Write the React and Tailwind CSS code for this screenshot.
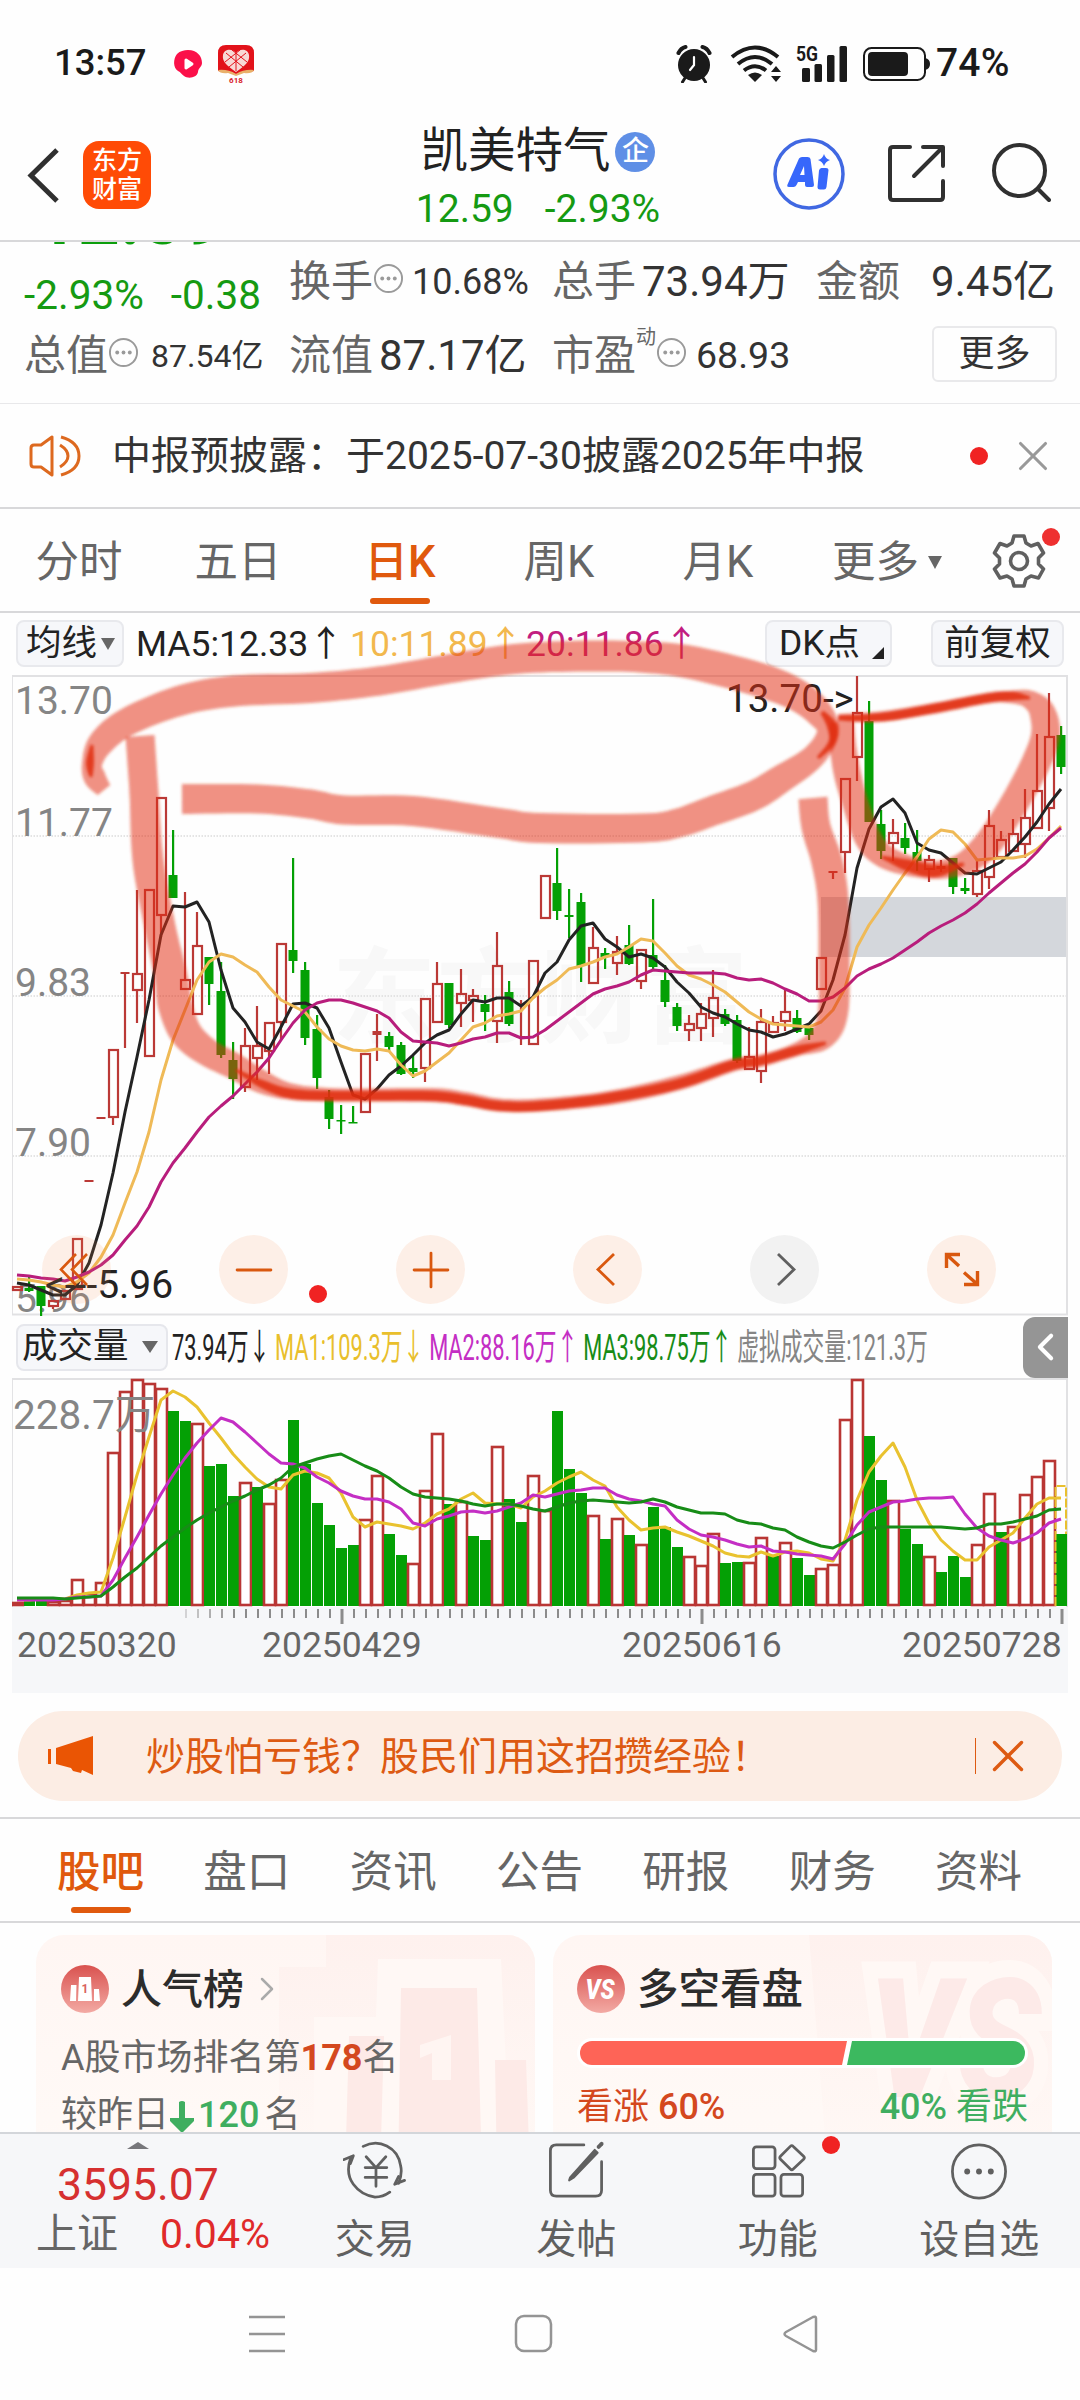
import { ChevronLeft, ChevronRight, Minus, Plus, X } from 'lucide-react';

const STEP = 12;
const xAt = (i) => 17 + i * STEP;

// [color, high, bodyTop, bodyBottom, low]
const CANDLES = [
  ['r', 1286, 1286, 1291, 1291], ['g', 1277, 1288, 1291, 1292], ['g', 1286, 1286, 1306, 1316], ['r', 1300, 1300, 1307, 1309],
  ['r', 1290, 1290, 1300, 1300], ['r', 1238, 1238, 1290, 1290], ['r', 1181, 1181, 1181, 1181], ['r', 1118, 1118, 1118, 1118],
  ['r', 1049, 1049, 1118, 1125], ['r', 973, 973, 973, 1048], ['r', 890, 973, 991, 1023], ['r', 889, 889, 1057, 1057],
  ['r', 797, 797, 916, 937], ['g', 830, 875, 898, 898], ['r', 892, 979, 990, 990], ['r', 912, 945, 1015, 1015],
  ['g', 957, 957, 984, 1005], ['g', 962, 991, 1055, 1058], ['g', 1042, 1060, 1079, 1099], ['r', 1028, 1045, 1088, 1092],
  ['r', 1006, 1045, 1059, 1080], ['r', 1022, 1022, 1052, 1074], ['r', 943, 943, 1023, 1040], ['g', 858, 950, 961, 973],
  ['g', 962, 970, 1038, 1045], ['g', 1015, 1029, 1078, 1089], ['g', 1090, 1097, 1119, 1129], ['g', 1105, 1120, 1120, 1134],
  ['g', 1106, 1122, 1122, 1123], ['r', 1053, 1053, 1113, 1113], ['r', 1014, 1031, 1035, 1061], ['g', 1032, 1036, 1047, 1052],
  ['g', 1042, 1045, 1074, 1075], ['g', 1056, 1068, 1072, 1078], ['r', 998, 998, 1069, 1082], ['r', 962, 983, 1023, 1023],
  ['g', 983, 983, 1025, 1028], ['r', 969, 993, 1004, 1027], ['r', 989, 995, 1001, 1022], ['g', 995, 1004, 1012, 1031],
  ['r', 932, 965, 1022, 1043], ['g', 981, 992, 1024, 1026], ['r', 1000, 1037, 1037, 1045], ['r', 960, 960, 1045, 1045],
  ['r', 875, 875, 919, 919], ['g', 848, 883, 911, 920], ['g', 889, 915, 917, 938], ['g', 893, 902, 966, 982],
  ['r', 927, 947, 984, 984], ['g', 948, 953, 957, 969], ['r', 936, 951, 964, 975], ['g', 925, 945, 964, 965],
  ['r', 949, 949, 982, 989], ['g', 899, 955, 967, 970], ['g', 965, 980, 1002, 1007], ['g', 1003, 1007, 1026, 1031],
  ['r', 1015, 1023, 1031, 1041], ['r', 1003, 1013, 1029, 1041], ['r', 970, 997, 1019, 1037], ['g', 1009, 1014, 1024, 1026],
  ['g', 1015, 1020, 1061, 1063], ['r', 1027, 1056, 1070, 1070], ['r', 1009, 1021, 1072, 1083], ['r', 1016, 1022, 1033, 1033],
  ['r', 990, 1011, 1022, 1031], ['g', 1010, 1018, 1032, 1033], ['g', 1028, 1028, 1035, 1040], ['r', 957, 957, 990, 990],
  ['r', 872, 872, 872, 879], ['r', 778, 778, 853, 873], ['r', 676, 712, 758, 781], ['g', 701, 721, 822, 822],
  ['g', 810, 824, 851, 859], ['r', 819, 832, 844, 861], ['g', 823, 838, 848, 854], ['g', 830, 852, 861, 871],
  ['r', 855, 859, 870, 882], ['r', 860, 866, 869, 872], ['g', 858, 858, 887, 894], ['g', 878, 888, 891, 894],
  ['r', 859, 870, 895, 897], ['r', 810, 825, 878, 889], ['r', 831, 839, 858, 858], ['r', 819, 833, 852, 852],
  ['r', 789, 817, 845, 858], ['r', 734, 790, 829, 829], ['r', 693, 736, 809, 831], ['g', 726, 735, 767, 774],
];

const MA5 = [
  1283, 1285, 1290, 1295, 1295, 1285, 1263, 1225, 1173, 1112, 1057, 1000, 935, 906, 907, 902, 922, 970, 1008, 1022,
  1042, 1049, 1027, 1004, 1003, 1008, 1028, 1062, 1095, 1099, 1089, 1075, 1066, 1055, 1043, 1035, 1030, 1014, 1000, 1002,
  998, 998, 1006, 997, 973, 962, 940, 926, 923, 939, 947, 957, 954, 958, 967, 982, 993, 1007, 1013, 1017,
  1024, 1030, 1032, 1037, 1034, 1029, 1024, 1011, 980, 935, 868, 829, 807, 799, 813, 843, 850, 853, 863, 873,
  874, 868, 862, 850, 837, 822, 804, 789,
];
const MA10 = [
  1279, 1280, 1282, 1285, 1287, 1282, 1273, 1257, 1235, 1203, 1172, 1132, 1080, 1040, 1010, 980, 962, 954, 957, 965,
  972, 987, 1000, 1006, 1012, 1027, 1039, 1046, 1050, 1051, 1049, 1051, 1065, 1076, 1071, 1062, 1053, 1040, 1027, 1023,
  1016, 1014, 1011, 998, 988, 980, 969, 966, 962, 957, 954, 947, 939, 941, 953, 966, 975, 979, 985, 992,
  1002, 1012, 1019, 1024, 1025, 1026, 1027, 1022, 1010, 988, 947, 925, 908, 890, 873, 857, 839, 830, 832, 844,
  860, 859, 858, 858, 856, 849, 838, 826,
];
const MA20 = [
  1275, 1276, 1278, 1279, 1281, 1277, 1272, 1265, 1255, 1240, 1226, 1207, 1182, 1163, 1148, 1132, 1117, 1106, 1096, 1084,
  1072, 1058, 1040, 1023, 1010, 1003, 1000, 1000, 1003, 1007, 1011, 1018, 1032, 1041, 1042, 1043, 1046, 1043, 1039, 1037,
  1033, 1033, 1038, 1037, 1030, 1021, 1012, 1003, 994, 989, 986, 982, 975, 970, 971, 972, 973, 973, 973, 974,
  978, 980, 979, 983, 989, 994, 1001, 1001, 997, 988, 976, 969, 964, 958, 950, 942, 933, 926, 920, 913,
  904, 893, 883, 873, 864, 852, 838, 828,
];

const VOL_COLORS = 'rggrrrrrrrrrrggrgggrgrrgggggg' + 'rrggrrrgrggrggrrgggrgrgrgggrrrggrrgrggrrrrggrggrgggrrgrrrrg';
const VOL_TOPS = [
  1602, 1601, 1600, 1601, 1600, 1579, 1593, 1582, 1452, 1391, 1379, 1383, 1388, 1411, 1421, 1423, 1466, 1464, 1496, 1482,
  1487, 1503, 1479, 1420, 1464, 1503, 1525, 1548, 1545, 1519, 1475, 1534, 1555, 1563, 1490, 1433, 1504, 1501, 1536, 1540,
  1446, 1499, 1522, 1475, 1510, 1411, 1469, 1493, 1515, 1539, 1518, 1535, 1544, 1507, 1527, 1547, 1556, 1565, 1533, 1563,
  1562, 1562, 1537, 1556, 1542, 1558, 1575, 1568, 1564, 1419, 1379, 1436, 1480, 1500, 1529, 1544, 1556, 1572, 1556, 1577,
  1544, 1493, 1532, 1526, 1494, 1476, 1460, 1534,
];
const VMA1 = [
  1600, 1600, 1599, 1599, 1599, 1595, 1593, 1592, 1558, 1517, 1475, 1437, 1400, 1391, 1397, 1407, 1423, 1438, 1454, 1467,
  1479, 1487, 1489, 1475, 1471, 1473, 1478, 1493, 1517, 1527, 1522, 1524, 1526, 1529, 1523, 1514, 1509, 1499, 1493, 1503,
  1504, 1504, 1508, 1497, 1491, 1483, 1477, 1472, 1480, 1486, 1507, 1520, 1530, 1528, 1527, 1532, 1536, 1541, 1546, 1553,
  1556, 1557, 1552, 1556, 1552, 1551, 1553, 1559, 1561, 1540, 1500, 1472, 1456, 1443, 1467, 1500, 1523, 1540, 1551, 1560,
  1560, 1547, 1540, 1533, 1518, 1504, 1498, 1498,
];
const VMA2 = [
  1600, 1600, 1600, 1600, 1599, 1597, 1597, 1596, 1580, 1558, 1537, 1515, 1494, 1475, 1458, 1443, 1430, 1418, 1422, 1432,
  1443, 1454, 1463, 1464, 1468, 1477, 1483, 1491, 1496, 1499, 1499, 1502, 1509, 1523, 1526, 1519, 1516, 1512, 1511, 1513,
  1511, 1507, 1503, 1495, 1497, 1494, 1491, 1490, 1488, 1488, 1495, 1499, 1501, 1504, 1506, 1520, 1529, 1535, 1537, 1540,
  1544, 1547, 1546, 1551, 1552, 1554, 1555, 1556, 1559, 1544, 1525, 1512, 1507, 1502, 1501, 1499, 1498, 1498, 1497, 1514,
  1528, 1536, 1540, 1543, 1539, 1533, 1523, 1519,
];
const VMA3 = [
  1598, 1598, 1598, 1598, 1599, 1598, 1597, 1596, 1587, 1577, 1568, 1557, 1546, 1537, 1528, 1520, 1513, 1507, 1501, 1496,
  1490, 1485, 1478, 1467, 1463, 1459, 1456, 1454, 1460, 1466, 1471, 1478, 1487, 1494, 1497, 1498, 1499, 1501, 1504, 1506,
  1504, 1504, 1506, 1509, 1511, 1507, 1503, 1501, 1500, 1501, 1502, 1503, 1502, 1499, 1502, 1507, 1510, 1513, 1513, 1514,
  1520, 1523, 1524, 1528, 1530, 1537, 1542, 1546, 1548, 1542, 1535, 1529, 1527, 1527, 1527, 1527, 1527, 1527, 1528, 1529,
  1528, 1524, 1524, 1522, 1519, 1516, 1510, 1509,
];

// Marker strokes: [x, y, width]
const SOFT_STROKES = [
  [[104, 790, 16], [95, 778, 22], [92, 764, 20], [101, 743, 26], [127, 722, 28], [179, 701, 30], [234, 691, 31], [310, 688, 30], [379, 681, 29], [448, 669, 29], [515, 659, 30], [585, 656, 31], [640, 657, 31], [689, 662, 33], [757, 679, 34], [795, 694, 32], [818, 712, 28], [828, 732, 22], [813, 757, 24], [781, 779, 28], [753, 796, 30], [712, 811, 30], [678, 823, 29], [643, 828, 29], [540, 828, 30], [499, 823, 30], [413, 811, 30], [344, 810, 29], [310, 804, 29], [258, 799, 29], [182, 799, 30]],
  [[140, 736, 29], [144, 793, 29], [148, 860, 31], [160, 927, 31], [171, 977, 33], [175, 1005, 34], [186, 1033, 32], [207, 1052, 28], [234, 1066, 26], [262, 1082, 23], [293, 1092, 16], [344, 1095, 13], [430, 1095, 14], [465, 1099, 14], [499, 1105, 13], [540, 1105, 13], [609, 1098, 14], [678, 1083, 15], [733, 1065, 13], [760, 1061, 12], [798, 1049, 14], [822, 1037, 26], [833, 1013, 30], [834, 960, 31], [833, 900, 31], [827, 862, 31], [816, 827, 29], [813, 798, 29]],
  [[842, 722, 24], [843, 745, 26], [847, 772, 27], [855, 802, 26], [868, 838, 27], [884, 856, 24], [910, 866, 20], [936, 870, 18], [962, 864, 22], [984, 848, 28], [1004, 820, 28], [1030, 775, 29], [1045, 738, 29], [1042, 712, 26], [1028, 699, 18], [1008, 697, 12], [988, 698, 11], [936, 708, 11], [884, 716, 10], [838, 718, 8]],
];
const DARK_STROKES = [
  [[91, 777, 3], [90, 763, 8], [92, 745, 3]],
  [[236, 1070, 3], [262, 1084, 8], [293, 1094, 10], [344, 1096, 10], [430, 1096, 10], [465, 1100, 10], [499, 1106, 10], [540, 1106, 10], [609, 1098, 10], [678, 1084, 10], [733, 1065, 10], [760, 1061, 9], [798, 1050, 9], [826, 1043, 3]],
  [[822, 712, 4], [832, 726, 10], [832, 742, 7], [818, 758, 3]],
  [[838, 718, 5], [884, 717, 9], [936, 708, 9], [988, 698, 9], [1012, 696, 9], [1030, 698, 3]],
  [[882, 857, 3], [910, 866, 12], [936, 871, 12], [964, 864, 3]],
];

function ribbon(points) {
  const left = [];
  const right = [];
  const get = (i) => points[Math.max(0, Math.min(points.length - 1, i))];
  const samples = [];
  for (let i = 0; i < points.length - 1; i++) {
    for (let s = 0; s < 8; s++) {
      const t = s / 8;
      samples.push([0, 1, 2].map((k) => {
        const [a, b, c, d] = [get(i - 1)[k], get(i)[k], get(i + 1)[k], get(i + 2)[k]];
        return 0.5 * (2 * b + (c - a) * t + (2 * a - 5 * b + 4 * c - d) * t * t + (3 * b - a - 3 * c + d) * t * t * t);
      }));
    }
  }
  samples.push(points[points.length - 1]);
  samples.forEach(([x, y, w], i) => {
    const p = samples[Math.max(0, i - 1)];
    const n = samples[Math.min(samples.length - 1, i + 1)];
    const dx = n[0] - p[0];
    const dy = n[1] - p[1];
    const len = Math.hypot(dx, dy) || 1;
    left.push(`${(x - (dy / len) * w / 2).toFixed(1)},${(y + (dx / len) * w / 2).toFixed(1)}`);
    right.unshift(`${(x + (dy / len) * w / 2).toFixed(1)},${(y - (dx / len) * w / 2).toFixed(1)}`);
  });
  return `M${[...left, ...right].join('L')}Z`;
}

const line = (ys) => ys.map((y, i) => `${xAt(i)},${y}`).join(' ');

function Candle({ i, data }) {
  const [color, high, top, bottom, low] = data;
  const x = xAt(i);
  if (color === 'g') {
    return (
      <g fill="#04a005">
        <rect x={x - 1} y={high} width="2.2" height={low - high} />
        <rect x={x - 4.5} y={top} width="9" height={Math.max(1.5, bottom - top)} />
      </g>
    );
  }
  return (
    <g stroke="#bb3936" strokeWidth="2.2" fill="none">
      {bottom - top > 4 && <rect x={x - 4} y={top + 1} width="9" height={bottom - top - 2} />}
      {bottom - top <= 4 && <path d={`M${x - 4.5} ${(top + bottom) / 2}h9`} strokeWidth={Math.max(2, bottom - top)} />}
      {high < top && <path d={`M${x} ${high}V${top}`} />}
      {low > bottom && <path d={`M${x} ${bottom}V${low}`} />}
    </g>
  );
}

function PriceChart() {
  return (
    <div className="relative h-[639px]">
      <svg viewBox="12 675 1056 639" className="block h-[639px] w-[1056px] overflow-visible" fontFamily="Roboto, 'Noto Sans CJK SC', sans-serif">
        <defs>
          <filter id="soft" x="-5%" y="-5%" width="110%" height="110%">
            <feGaussianBlur stdDeviation="1.6" />
          </filter>
        </defs>
        <text x="332" y="1035" fontSize="104" fontWeight="700" fill="#f8f8f8" textLength="416">东方财富</text>
        <rect x="821" y="897" width="246" height="60" fill="#d4d7dc" />
        <path d="M12.5 836H1067M12.5 996H1067M12.5 1156H1067" stroke="#dcdcdc" strokeWidth="1.5" strokeDasharray="1.5 1.5" />
        <path d="M12.5 675V1314" stroke="#e3e3e5" strokeWidth="1" />
        <path d="M12 676H1067V1314.5H12" stroke="#e1e1e3" strokeWidth="2" fill="none" />
        <g fontSize="39" fill="#858585">
          <text x="15" y="714">13.70</text>
          <text x="15" y="836">11.77</text>
          <text x="15" y="996">9.83</text>
          <text x="15" y="1156">7.90</text>
          <text x="15" y="1312">5.96</text>
        </g>
        {CANDLES.map((c, i) => <Candle key={i} i={i} data={c} />)}
        <g fill="none" strokeWidth="3" strokeLinejoin="round">
          <polyline points={line(MA5)} stroke="#232323" />
          <polyline points={line(MA10)} stroke="#efba57" />
          <polyline points={line(MA20)} stroke="#b81d7c" />
        </g>
        <text x="726" y="712" fontSize="38.6" fill="#222">13.70-&gt;</text>
        <text x="45" y="1298" fontSize="39" fill="#222">&lt;---5.96</text>
        <g filter="url(#soft)">
          {SOFT_STROKES.map((s, i) => <path key={i} d={ribbon(s)} fill="#e32e12" opacity="0.53" />)}
          {DARK_STROKES.map((s, i) => <path key={i} d={ribbon(s)} fill="#e02c10" opacity="0.85" />)}
        </g>
      </svg>
      <ChartControls />
      <span className="absolute top-[610px] left-[297px] size-[18px] rounded-full bg-[#f02323]" />
    </div>
  );
}

function ChartControls() {
  const base = 'flex size-[69px] items-center justify-center rounded-full';
  const orange = `${base} bg-[#f98b4b]/13 text-[#d9580f]`;
  return (
    <div className="absolute top-[560px] left-[30px] flex gap-[108px]">
      <button className={orange}>
        <svg viewBox="0 0 69 69" className="size-[69px]" fill="none" stroke="currentColor" strokeWidth="2.6">
          <path d="M34 19L19 34.500L34 50M45 19L30 34.500L45 50" />
        </svg>
      </button>
      <button className={orange}><Minus size={58} strokeWidth={1.15} absoluteStrokeWidth={false} /></button>
      <button className={orange}><Plus size={58} strokeWidth={1.15} absoluteStrokeWidth={false} /></button>
      <button className={orange}>
        <svg viewBox="0 0 69 69" className="size-[69px]" fill="none" stroke="currentColor" strokeWidth="2.8"><path d="M41 19L25 34.500L41 50" /></svg>
      </button>
      <button className={`${base} bg-[#f2f2f2] text-[#606060]`}>
        <svg viewBox="0 0 69 69" className="size-[69px]" fill="none" stroke="currentColor" strokeWidth="2.8"><path d="M28 19L44 34.500L28 50" /></svg>
      </button>
      <button className={orange}>
        <svg viewBox="0 0 69 69" className="size-[69px]" fill="none" stroke="currentColor" strokeWidth="3.400">
          <path d="M19.500 33V19.500H33M20 20L32 31M37 37.500L50 49M50.500 36V49.500H37" />
        </svg>
      </button>
    </div>
  );
}

function VolumeChart() {
  return (
    <svg viewBox="12 1378 1056 315" className="block h-[315px] w-[1056px]" fontFamily="Roboto, 'Noto Sans CJK SC', sans-serif">
      <rect x="12" y="1607" width="1056" height="86" fill="#f6f7f9" />
      <path d="M12.5 1378V1607" stroke="#e3e3e5" />
      <path d="M12 1379H1067V1607" stroke="#e1e1e3" strokeWidth="2" fill="none" />
      {VOL_TOPS.map((top, i) => {
        const x = xAt(i);
        if (VOL_COLORS[i] === 'g') return <rect key={i} x={x - 5} y={top} width="11" height={1606 - top} fill="#04a005" />;
        return <rect key={i} x={x - 5} y={top + 1} width="11" height={1605 - top - 1} fill="#fff" stroke="#b93634" strokeWidth="2.600" />;
      })}
      <path d="M1055.500 1606V1486H1066V1534" stroke="#e9c02f" strokeWidth="2" strokeDasharray="9 2" fill="none" />
      <g fill="none" strokeWidth="3" strokeLinejoin="round">
        <polyline points={line(VMA1)} stroke="#e9c22f" />
        <polyline points={line(VMA2)} stroke="#c42ec4" />
        <polyline points={line(VMA3)} stroke="#178c17" />
      </g>
      <text x="13" y="1429" fontSize="40.500" fill="#858585">228.7万</text>
      {CANDLES.map((_, i) => {
        if (i < 14) return null;
        const major = i % 30 === 27;
        return (
          <rect key={i} x={xAt(i) + (major ? -0.5 : 0)} y="1609" width={major ? 3 : 2} height={major ? 15 : 9} fill="#8c8c8c" opacity={i < 18 ? (i - 12) / 6 : 1} />
        );
      })}
      <g fontSize="35.5" fill="#666">
        <text x="17" y="1657">20250320</text>
        <text x="262" y="1657">20250429</text>
        <text x="622" y="1657">20250616</text>
        <text x="902" y="1657">20250728</text>
      </g>
    </svg>
  );
}

function InfoDot() {
  return (
    <svg viewBox="0 0 32 32" className="-mt-[7px] size-[31px] shrink-0" fill="none" stroke="#9a9a9a" strokeWidth="2">
      <circle cx="16" cy="16" r="14" />
      <g fill="#9a9a9a" stroke="none"><circle cx="9.500" cy="16" r="2" /><circle cx="16" cy="16" r="2" /><circle cx="22.500" cy="16" r="2" /></g>
    </svg>
  );
}

function StatusBar() {
  return (
    <div className="flex h-[127px] items-center pr-[64px] pl-[54px] text-[36px] font-medium text-[#1a1a1a]">
      <span className="w-[119px] text-[36.500px]">13:57</span>
      <svg viewBox="0 0 30 30" className="h-[30px] w-[30px]">
        <path d="M15 1C24 1 29 7 29 14C29 18 25 19 25 23C24 29 15 30 11 27C8 25 8 23 5 22C0 19 0 10 4 5C7 2 11 1 15 1Z" fill="#fb1049" />
        <path d="M13 11L19 15L13 19Z" fill="#fff" stroke="#fff" strokeWidth="3" strokeLinejoin="round" />
      </svg>
      <svg viewBox="0 0 36 38" className="ml-[15px] h-[38px] w-[36px]">
        <path d="M8 0H28Q36 0 36 8V26L18 29L0 26V8Q0 0 8 0Z" fill="#e2121a" />
        <path d="M0 25Q10 24 18 29Q26 24 36 25Q34 29 26 28L18 31L10 28Q2 29 0 25Z" fill="#e9b06a" />
        <path d="M18 27C8 20 4 16 5 10C6 4 14 3 18 8C22 3 30 4 31 10C32 16 28 20 18 27Z" fill="#f8d9d6" />
        <path d="M8 8L25 22M14 5L29 17M28 8L11 22M22 5L7 17M18 8V26" stroke="#e2121a" strokeWidth="1" />
        <text x="18" y="37.500" fontSize="8" fontWeight="700" textAnchor="middle" fill="#d9242a" fontFamily="Roboto, sans-serif">618</text>
      </svg>
      <div className="ml-auto flex items-center">
        <svg viewBox="0 0 36 38" className="h-[38px] w-[36px]" fill="none" stroke="#1a1a1a">
          <circle cx="18" cy="20" r="16" fill="#1a1a1a" stroke="none" />
          <path d="M2.500 8Q5 3 9.500 2M33.500 8Q31 3 26.500 2" strokeWidth="4" strokeLinecap="round" />
          <path d="M9 33L6.500 37M27 33L29.500 37" strokeWidth="3" strokeLinecap="round" />
          <path d="M18 12V20L14 25" stroke="#fff" strokeWidth="2.200" strokeLinecap="round" />
        </svg>
        <svg viewBox="0 0 52 38" className="ml-[18px] h-[38px] w-[52px]" fill="none" stroke="#1a1a1a" strokeWidth="4">
          <path d="M2 12Q25 -7 48 12M8 19Q25 5 42 19M14 25.500Q25 17 36 25.500" />
          <path d="M18 30Q25 25 32 30L25 37Z" fill="#1a1a1a" stroke="none" />
          <path d="M41 27L46 21L51 27ZM41 31L46 37L51 31Z" fill="#1a1a1a" stroke="none" />
        </svg>
        <svg viewBox="0 0 52 38" className="ml-[14px] h-[38px] w-[52px] overflow-visible" fill="#1a1a1a">
          <text x="0" y="15.500" fontSize="20" fontWeight="700" fontFamily="Roboto, sans-serif" textLength="22" lengthAdjust="spacingAndGlyphs">5G</text>
          <rect x="6" y="23" width="8" height="14" rx="1.500" /><rect x="18.500" y="19" width="7.500" height="18" rx="1.500" />
          <rect x="31" y="10" width="7.500" height="27" rx="1.500" /><rect x="43.500" y="1" width="7.500" height="36" rx="1.500" />
        </svg>
        <svg viewBox="0 0 68 34" className="ml-[15px] h-[34px] w-[68px]">
          <rect x="1" y="1" width="61" height="32" rx="7.500" fill="none" stroke="#1a1a1a" strokeWidth="2" />
          <rect x="5" y="5" width="40" height="24" rx="4" fill="#1a1a1a" />
          <path d="M62 11Q67 12 67 17Q67 22 62 23Z" fill="#1a1a1a" />
        </svg>
        <span className="ml-[5px] w-[80px] text-[39px] tracking-[0.2px]">74%</span>
      </div>
    </div>
  );
}

function Header() {
  return (
    <div className="grid h-[115px] grid-cols-[1fr_auto_1fr] border-b-2 border-[#d8d8da] pr-[29px] pl-[25px]">
      <div className="flex gap-[24px] pt-[14px]">
        <svg viewBox="0 0 34 68" className="h-[68px] w-[34px]" fill="none" stroke="#303030" strokeWidth="5"><path d="M32 9L6 34.500L32 60" /></svg>
        <div className="flex size-[68px] flex-col items-center justify-center rounded-[16px] bg-[#ff4b06] text-[25px] leading-[29px] font-medium text-white">
          <span>东方</span>
          <span>财富</span>
        </div>
      </div>
      <div className="flex flex-col items-center">
        <div className="flex h-[49px] items-center gap-[5px] text-[47.500px] text-[#222]">
          <span>凯美特气</span>
          <span className="flex size-10 items-center justify-center rounded-full bg-[#5f8fe6] text-[27px] font-medium text-white">企</span>
        </div>
        <div className="flex h-[66px] items-center gap-[31px] text-[39px] text-[#159a12]">
          <span>12.59</span>
          <span>-2.93%</span>
        </div>
      </div>
      <div className="flex justify-end pt-[10px]">
        <svg viewBox="0 0 72 74" className="h-[74px] w-[72px]" fill="none">
          <circle cx="36" cy="37" r="34" stroke="#4068e2" strokeWidth="3.500" />
          <path fillRule="evenodd" d="M26 21.500Q27 20 29 20H34.500Q37 20 37.500 22L41 48Q41 50 39 50H34Q32 50 32 48V45H25L23.500 48Q22.500 50 20.500 50H16Q13.500 50 14.500 47.500ZM27 38H31.500L31 29Z" fill="#3767fb" />
          <path d="M48.500 31H53Q55.500 31 55.500 33L53.500 50Q53 52.500 51 52.500H47Q44.500 52.500 44.500 50L46 33.500Q46.500 31 48.500 31ZM51 17Q52.500 22 57 23Q52.500 24.500 51 29Q49.500 24.500 45 23Q49.500 22 51 17Z" fill="#3767fb" />
        </svg>
        <svg viewBox="0 0 60 60" className="mt-[7px] ml-[42px] size-[60px]" fill="none" stroke="#303030" strokeWidth="4" strokeLinecap="round" strokeLinejoin="round">
          <path d="M23 3H6Q3 3 3 6V53Q3 56 6 56H53Q56 56 56 53V37M36 3H56V22M55 4L27 32" />
        </svg>
        <svg viewBox="0 0 60 60" className="mt-[5px] ml-[44px] size-[60px]" fill="none" stroke="#303030" strokeWidth="4" strokeLinecap="round">
          <circle cx="28.500" cy="28.500" r="25.500" /><path d="M47 47L58 58" />
        </svg>
      </div>
    </div>
  );
}

function QuoteStats() {
  return (
    <div className="relative h-[162px] overflow-hidden border-b border-[#e8e8ea] text-[42px] text-[#333]">
      <div className="absolute -top-[62px] left-[36px] text-[73px] leading-[78px] font-bold text-[#0c9e0c]">12.59</div>
      <div className="flex pl-6">
        <div className="flex w-[265px] gap-[27px] pt-[33px] text-[40.500px] text-[#159a12]"><span>-2.93%</span><span>-0.38</span></div>
        <div className="flex h-[80px] w-[263px] items-center"><span className="text-[#666]">换手</span><InfoDot /><span className="ml-[8px] text-[36px]">10.68%</span></div>
        <div className="flex h-[80px] w-[264px] items-center gap-[6px]"><span className="text-[#666]">总手</span>73.94万</div>
        <div className="flex h-[80px] w-[239px] items-center justify-between"><span className="text-[#666]">金额</span>9.45亿</div>
      </div>
      <div className="absolute top-[80px] left-6 flex h-[68px]">
        <div className="flex w-[265px] items-center"><span className="text-[#666]">总值</span><InfoDot /><span className="ml-[12px] text-[32px]">87.54亿</span></div>
        <div className="flex w-[263px] items-center gap-[6px]"><span className="text-[#666]">流值</span>87.17亿</div>
        <div className="flex w-[380px] items-center">
          <span className="text-[#666]">市盈</span>
          <span className="-mt-[38px] text-[20px] text-[#666]">动</span>
          <InfoDot />
          <span className="ml-[9px] text-[37.500px]">68.93</span>
        </div>
        <button className="mt-[4px] flex h-[56px] w-[125px] items-center justify-center rounded-md border-2 border-[#e9e9eb] text-[36px]">更多</button>
      </div>
    </div>
  );
}

function Notice() {
  return (
    <div className="flex h-[105px] items-center border-b-2 border-[#d8d8da] pr-[22px] pl-[29px]">
      <svg viewBox="0 0 52 44" className="h-[44px] w-[52px]" fill="none" stroke="#dd691f" strokeWidth="3" strokeLinejoin="round">
        <path d="M23 3V41L12 33H5Q2 33 2 30V14Q2 11 5 11H12ZM31 11Q39 16 39 22Q39 28 31 33M32 3Q50 8 50 22Q50 36 32 41" />
      </svg>
      <span className="mt-[2px] ml-[31px] text-[39px] text-[#333]">中报预披露：于2025-07-30披露2025年中报</span>
      <span className="ml-auto size-[18px] rounded-full bg-[#f02323]" />
      <X size={50} strokeWidth={1.500} className="ml-[20px] text-[#999]" />
    </div>
  );
}

function PeriodTabs() {
  const tabs = [['分时', 'w-[158px]'], ['五日', 'w-[160px]'], ['日K', 'w-[164px]'], ['周K', 'w-[154px]'], ['月K', 'w-[164px]']];
  return (
    <div className="flex h-[104px] border-b-2 border-[#d8d8da] text-[43.500px] text-[#666]">
      {tabs.map(([label, width]) => (
        <button key={label} className={`relative flex justify-center pt-[32px] ${width} ${label === '日K' ? 'font-medium text-[#e0590d]' : ''}`}>
          {label}
          {label === '日K' && <span className="absolute bottom-[7px] h-[6px] w-[60px] rounded-full bg-[#e0590d]" />}
        </button>
      ))}
      <button className="ml-[32px] flex items-start pt-[32px]">更多<span className="mt-[15px] ml-[9px] border-x-[7px] border-t-[13px] border-x-transparent border-t-[#666]" /></button>
      <div className="relative mt-[25px] ml-[50px] size-[54px]">
        <svg viewBox="0 0 54 54" className="size-[54px]" fill="none" stroke="#606060" strokeWidth="3.600" strokeLinejoin="round">
          <path d="M22 2H32L34 9L39 12L46 9.500L51.500 19L46.500 24V30L51.500 35L46.500 44L39 42L34 45L32 52H22L20 45L15 42L8 44L2.500 35L7.500 30V24L2.500 19L8 9.500L15 12L20 9Z" />
          <circle cx="27" cy="27" r="8.500" />
        </svg>
        <span className="absolute -top-[6px] left-[50px] size-[18px] rounded-full bg-[#ee3030]" />
      </div>
    </div>
  );
}

function Indicators() {
  const chip = 'flex h-[47px] items-center rounded-lg border-2 border-[#e8e9ed] bg-[#f6f7fa] text-[#222]';
  return (
    <div className="flex h-[62px] pl-4 pt-[7px] text-[35.500px]">
      <div className={`${chip} w-[108px] pl-[8px]`}>均线<span className="ml-[4px] border-x-[7px] border-t-[12px] border-x-transparent border-t-[#666]" /></div>
      <div className="ml-[12px] flex h-[50px] items-center whitespace-nowrap">
        <span className="w-[214px] text-[#222]">MA5:12.33↑</span>
        <span className="w-[176px] text-[#f2b84d]">10:11.89↑</span>
        <span className="text-[#c21d80]">20:11.86↑</span>
      </div>
      <div className={`${chip} relative ml-auto w-[127px] pl-[12px]`}>DK点<span className="absolute right-[6px] bottom-[6px] border-b-[12px] border-l-[12px] border-l-transparent border-b-[#222]" /></div>
      <div className={`${chip} mr-4 ml-[39px] w-[133px] justify-center`}>前复权</div>
    </div>
  );
}

function VolumeHeader() {
  return (
    <div className="flex h-[64px] items-center overflow-hidden pt-[2px]">
      <div className="ml-[4px] flex h-[47px] w-[152px] shrink-0 items-center rounded-lg border-2 border-[#e6e7ec] bg-[#f6f7fa] pl-[4px] text-[35.500px] text-[#222]">
        成交量<span className="ml-[13px] border-x-[8px] border-t-[12px] border-x-transparent border-t-[#666]" />
      </div>
      <div className="mt-[2px] ml-[4px] flex w-[760px] origin-left scale-x-[0.605] gap-[8px] text-[36px] whitespace-nowrap">
        <span className="text-[#222]">73.94万↓</span>
        <span className="text-[#e9bf2c]">MA1:109.3万↓</span>
        <span className="text-[#c42ec4]">MA2:88.16万↑</span>
        <span className="text-[#178c17]">MA3:98.75万↑</span>
        <span className="text-[#858585]">虚拟成交量:121.3万</span>
      </div>
      <div className="ml-auto flex h-[61px] w-[45px] shrink-0 items-center justify-center rounded-l-xl bg-[#959595]">
        <ChevronLeft size={48} strokeWidth={2.200} className="text-white" />
      </div>
    </div>
  );
}

function Banner() {
  return (
    <div className="mx-[18px] mt-[18px] flex h-[90px] items-center rounded-full bg-[#fcede4] pl-[29px] text-[#dd5a12]">
      <svg viewBox="0 0 46 40" className="h-[40px] w-[46px]" fill="#ea5504"><path d="M1 13H4V28H1ZM9 12L46 0V39L35 34L34 37L26 35L24 32L9 28Z" /></svg>
      <span className="mt-[2px] ml-[53px] text-[39px]">炒股怕亏钱？股民们用这招攒经验！</span>
      <span className="ml-auto h-[36px] w-[1.500px] bg-[#dd5a12]" />
      <X size={54} strokeWidth={1.500} className="mr-[27px] ml-[5px]" />
    </div>
  );
}

function SectionTabs() {
  const tabs = ['股吧', '盘口', '资讯', '公告', '研报', '财务', '资料'];
  return (
    <div className="mt-[16px] flex h-[106px] justify-between border-y-2 border-[#d8d8da] pr-[58px] pl-[57px] text-[43.500px] text-[#666]">
      {tabs.map((t, i) => (
        <button key={t} className={`relative flex justify-center pt-[32px] ${i === 0 ? 'font-medium text-[#e0590d]' : ''}`}>
          {t}
          {i === 0 && <span className="absolute bottom-[8px] h-[6px] w-[60px] rounded-full bg-[#e0590d]" />}
        </button>
      ))}
    </div>
  );
}

function Cards() {
  return (
    <div className="flex h-[209px] gap-[18px] overflow-hidden pt-[12px] pl-9">
      <div className="relative h-[240px] w-[499px] shrink-0 overflow-hidden rounded-[28px] bg-gradient-to-b from-[#fff6f3] to-[#fffaf7] px-[25px] pt-[30px]">
        <svg viewBox="0 0 499 240" className="absolute inset-0 h-[240px] w-[499px]">
          <defs>
            <linearGradient id="panel" x1="0" y1="0" x2="0" y2="1"><stop stopColor="#fef1ee" /><stop offset="1" stopColor="#fff9f6" /></linearGradient>
          </defs>
          <path d="M290 0H499V240H243V32H290Z" fill="url(#panel)" />
          <path d="M342 24H465L475 240H278V82H340Z" fill="#fff8f5" />
          <path d="M365 53H441L446 240H362ZM313 101H348L344 240H309ZM459 125H490L494 240H461Z" fill="#fdeae7" />
          <path d="M384 110L415 100V145H396V118L384 123Z" fill="#fff5f2" />
        </svg>
        <div className="relative flex h-[48px] items-center">
          <svg viewBox="0 0 48 48" className="size-[48px]">
            <defs><linearGradient id="badge" x1="0" y1="0" x2="0" y2="1"><stop stopColor="#d9524f" /><stop offset="1" stopColor="#f3aaa4" /></linearGradient></defs>
            <circle cx="24" cy="24" r="24" fill="url(#badge)" />
            <path d="M18 12H30L31 36H17ZM10 20H15.500L15 36H9ZM33 24H38L39 36H33Z" fill="#fff" />
            <text x="24" y="28" fontSize="12" fontWeight="700" textAnchor="middle" fill="#d9625d" fontFamily="Roboto, sans-serif">1</text>
          </svg>
          <span className="mt-[2px] ml-[12px] text-[41px] font-medium text-[#2c2c2c]">人气榜</span>
          <ChevronRight size={40} strokeWidth={1.500} className="ml-[3px] text-[#aaa]" />
        </div>
        <div className="relative mt-[16px] flex h-[57px] items-center text-[36px] text-[#666]">A股市场排名第<span className="font-bold text-[#d4481e]">178</span>名</div>
        <div className="relative flex h-[57px] items-center text-[36px] text-[#666]">
          较昨日
          <svg viewBox="0 0 24 34" className="mt-[4px] h-[34px] w-[26px]" fill="#3fae60"><path d="M9 2Q12 0 15 2V18H24V21L12 33L0 21V18H9Z" /></svg>
          <span className="mr-[5px] ml-[3px] font-medium text-[#3fae60]">120</span>名
        </div>
      </div>
      <div className="relative h-[240px] w-[499px] shrink-0 overflow-hidden rounded-[28px] bg-gradient-to-b from-[#fff6f3] to-[#fffaf7] px-[24px] pt-[30px]">
        <svg viewBox="0 0 499 240" className="absolute inset-0 h-[240px] w-[499px]">
          <path d="M256 0H499V240H275Z" fill="url(#panel)" />
          <text x="316" y="162" fontSize="166" fontWeight="900" fontStyle="italic" fill="#fdeae8" stroke="#fff8f5" strokeWidth="34" paintOrder="stroke" fontFamily="Roboto, sans-serif" textLength="172" lengthAdjust="spacingAndGlyphs">VS</text>
        </svg>
        <div className="relative flex h-[48px] items-center">
          <svg viewBox="0 0 48 48" className="size-[48px]">
            <circle cx="24" cy="24" r="24" fill="url(#badge)" />
            <text x="23" y="34" fontSize="27" fontWeight="900" fontStyle="italic" textAnchor="middle" fill="#fff" fontFamily="Roboto, sans-serif" textLength="29" lengthAdjust="spacingAndGlyphs">VS</text>
          </svg>
          <span className="mt-[2px] ml-[12px] text-[41.500px] font-medium text-[#2c2c2c]">多空看盘</span>
        </div>
        <svg viewBox="0 0 451 30" className="relative mt-[25px] block h-[30px] w-[451px]">
          <rect x="0" y="0" width="451" height="30" rx="15" fill="#fff" />
          <path d="M15 3H270L265 27H15A12 12 0 0 1 15 3Z" fill="#fe6457" />
          <path d="M275 3H436A12 12 0 0 1 436 27H270Z" fill="#3cb95f" />
        </svg>
        <div className="relative mt-[11px] flex h-[56px] items-center justify-between text-[36px]">
          <span className="text-[#d4481e]">看涨 <b className="font-medium">60%</b></span>
          <span className="text-[#3fae60]"><b className="font-medium">40%</b> 看跌</span>
        </div>
      </div>
    </div>
  );
}

const NAV_ICONS = {
  交易: (
    <>
      <path d="M20 6.500Q32 0 44 6T58 26Q60 34 56 44M7 19Q2 34 10 45T32 58Q40 58 47 53" />
      <path d="M0 20L10 16L7 24M62 41L52 45L56 37" />
      <path d="M23 17L33 28L43 17M22 28H44M22 38H44M33 28V47" />
    </>
  ),
  发帖: (
    <>
      <path d="M40 5H12Q6 5 6 11V51Q6 57 12 57H52Q58 57 58 51V22" />
      <path d="M26 38L51 10L54 13L30 38L25 41Z" fill="#606060" strokeWidth="2" /><path d="M55 7L58 4" strokeWidth="4" />
    </>
  ),
  功能: (
    <>
      <rect x="7" y="7" width="22" height="22" rx="3" /><rect x="7" y="35" width="22" height="22" rx="3" /><rect x="35" y="35" width="22" height="22" rx="3" />
      <path d="M44.500 6.500Q46 5 47.500 6.500L58 16.500Q59.500 18 58 19.500L47.500 29.500Q46 31 44.500 29.500L34.500 19.500Q33 18 34.500 16.500Z" />
    </>
  ),
  设自选: (
    <>
      <circle cx="32" cy="32" r="27" />
      <g fill="#606060" stroke="none"><circle cx="20" cy="32" r="3" /><circle cx="32" cy="32" r="3" /><circle cx="44" cy="32" r="3" /></g>
    </>
  ),
};

function BottomBar() {
  return (
    <div className="flex h-[136px] border-t-2 border-[#d3d6da] bg-[#f6f7f9]">
      <div className="w-[274px]">
        <span className="mt-[8px] ml-[127px] block w-0 border-x-[11px] border-b-[7px] border-x-transparent border-b-[#77777b]" />
        <div className="mt-[13px] ml-[57px] text-[44.500px] leading-[46px] text-[#d63030]">3595.07</div>
        <div className="ml-9 flex h-[52px] items-center gap-[43px] text-[41px]"><span className="text-[#666]">上证</span><span className="-ml-px text-[#e02a2a]">0.04%</span></div>
      </div>
      {Object.entries(NAV_ICONS).map(([label, icon]) => (
        <button key={label} className="relative flex w-[201.500px] flex-col items-center pt-[6px] text-[40px] leading-[56px] text-[#606060]">
          <svg viewBox="0 0 64 64" className="h-[64px] w-[64px]" fill="none" stroke="#606060" strokeWidth="2.800" strokeLinejoin="round" strokeLinecap="round">{icon}</svg>
          <span className="mt-[9px]">{label}</span>
          {label === '功能' && <span className="absolute top-[2px] left-[145px] size-[18px] rounded-full bg-[#f02323]" />}
        </button>
      ))}
    </div>
  );
}

export default function App() {
  return (
    <div className="h-[2400px] w-[1080px] overflow-hidden bg-[#fefefe] font-[Roboto,'Noto_Sans_CJK_SC',sans-serif] leading-none">
      <StatusBar />
      <Header />
      <QuoteStats />
      <Notice />
      <PeriodTabs />
      <Indicators />
      <div className="mx-3">
        <PriceChart />
        <VolumeHeader />
        <VolumeChart />
      </div>
      <Banner />
      <SectionTabs />
      <Cards />
      <BottomBar />
      <div className="flex h-[132px] items-center justify-center gap-[227px] pr-[12px]">
        <svg viewBox="0 0 40 40" className="size-10" stroke="#949494" strokeWidth="2.500"><path d="M2 3H38M2 20H38M2 37H38" /></svg>
        <svg viewBox="0 0 40 40" className="size-10" fill="none" stroke="#949494" strokeWidth="2.500"><rect x="2" y="2" width="35" height="35" rx="8" /></svg>
        <svg viewBox="0 0 40 40" className="size-10" fill="none" stroke="#949494" strokeWidth="2.500" strokeLinejoin="round"><path d="M35 4V36Q35 38 32 37L5 22Q2 20 5 18L32 3Q35 2 35 4Z" /></svg>
      </div>
    </div>
  );
}
